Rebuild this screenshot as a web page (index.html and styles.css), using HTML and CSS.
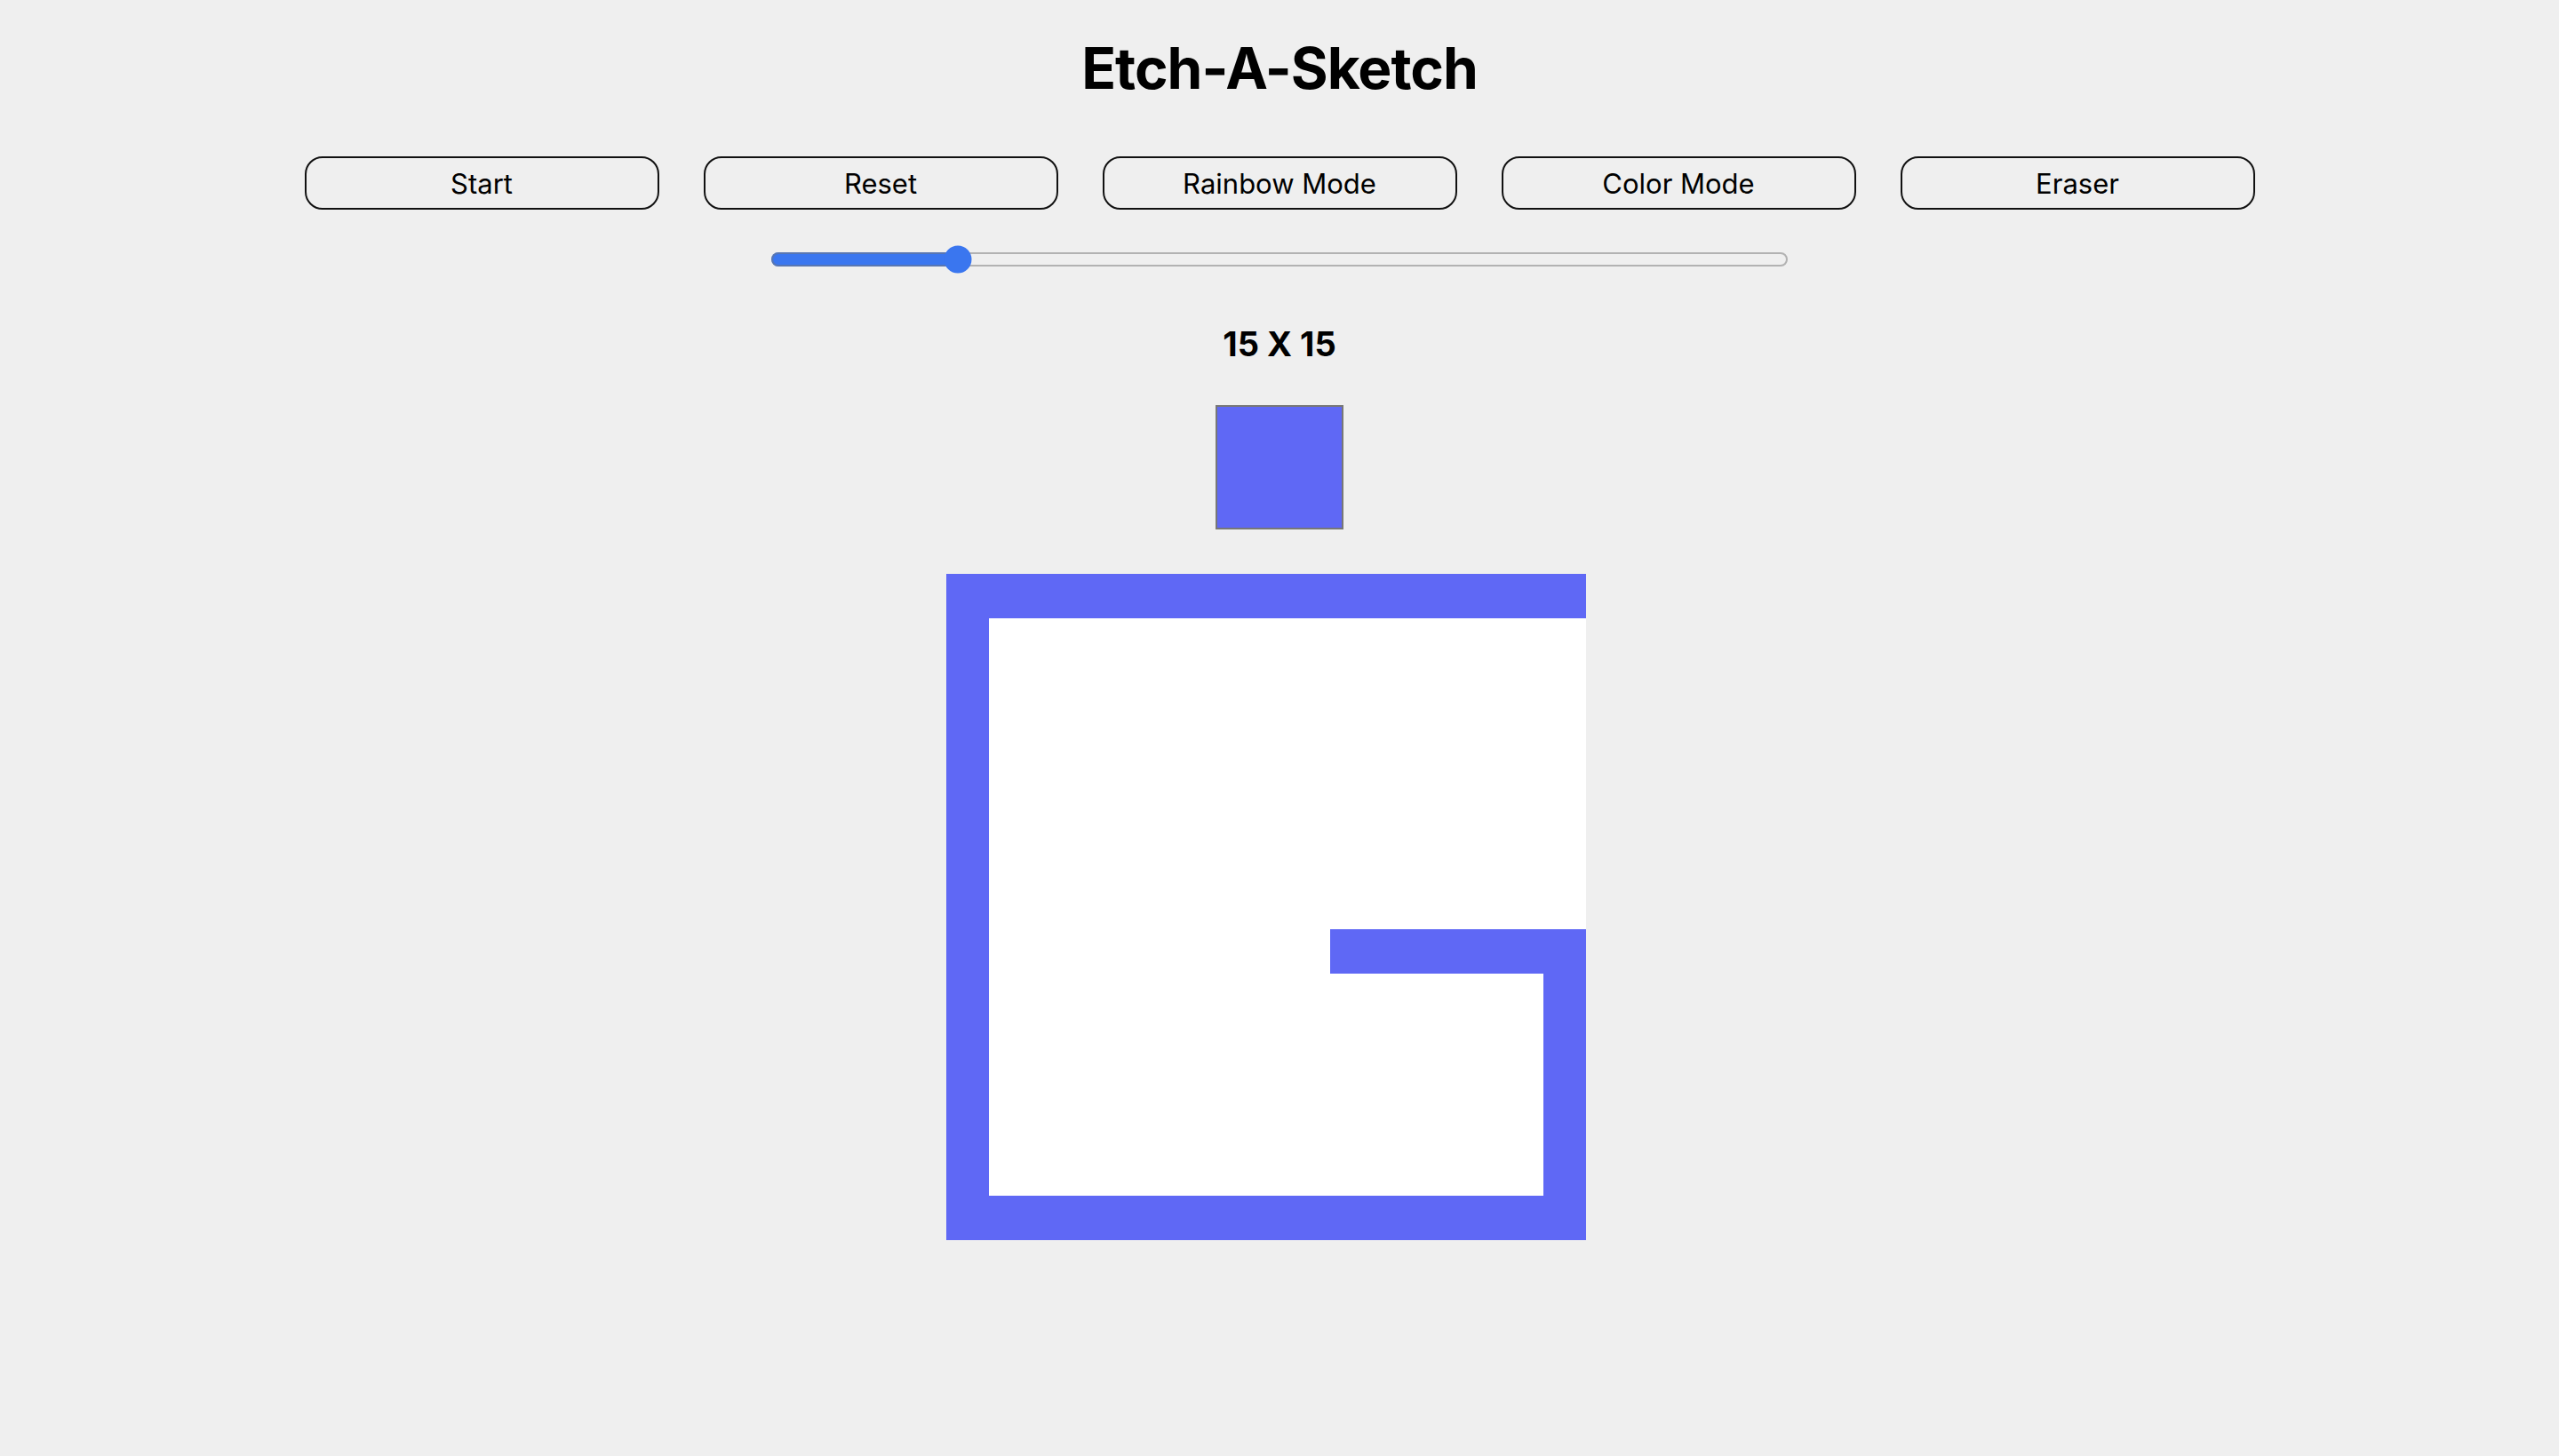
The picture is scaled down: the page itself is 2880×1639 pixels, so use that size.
FILE: index.html
```html
<!DOCTYPE html>
<html lang="en">
<head>
<meta charset="utf-8">
<title>Etch-A-Sketch</title>
<link rel="stylesheet" href="styles.css">
</head>
<body>
<main class="app">
  <h1 class="title">Etch-A-Sketch</h1>
  <div class="controls">
    <button class="btn">Start</button>
    <button class="btn">Reset</button>
    <button class="btn">Rainbow Mode</button>
    <button class="btn">Color Mode</button>
    <button class="btn">Eraser</button>
  </div>
  <input class="size-slider" type="range" min="1" max="81" value="15">
  <p class="size-label">15 X 15</p>
  <div class="swatch"></div>
  <div class="board">
<div class="cell on"></div><div class="cell on"></div><div class="cell on"></div><div class="cell on"></div><div class="cell on"></div><div class="cell on"></div><div class="cell on"></div><div class="cell on"></div><div class="cell on"></div><div class="cell on"></div><div class="cell on"></div><div class="cell on"></div><div class="cell on"></div><div class="cell on"></div><div class="cell on"></div>
<div class="cell on"></div><div class="cell"></div><div class="cell"></div><div class="cell"></div><div class="cell"></div><div class="cell"></div><div class="cell"></div><div class="cell"></div><div class="cell"></div><div class="cell"></div><div class="cell"></div><div class="cell"></div><div class="cell"></div><div class="cell"></div><div class="cell"></div>
<div class="cell on"></div><div class="cell"></div><div class="cell"></div><div class="cell"></div><div class="cell"></div><div class="cell"></div><div class="cell"></div><div class="cell"></div><div class="cell"></div><div class="cell"></div><div class="cell"></div><div class="cell"></div><div class="cell"></div><div class="cell"></div><div class="cell"></div>
<div class="cell on"></div><div class="cell"></div><div class="cell"></div><div class="cell"></div><div class="cell"></div><div class="cell"></div><div class="cell"></div><div class="cell"></div><div class="cell"></div><div class="cell"></div><div class="cell"></div><div class="cell"></div><div class="cell"></div><div class="cell"></div><div class="cell"></div>
<div class="cell on"></div><div class="cell"></div><div class="cell"></div><div class="cell"></div><div class="cell"></div><div class="cell"></div><div class="cell"></div><div class="cell"></div><div class="cell"></div><div class="cell"></div><div class="cell"></div><div class="cell"></div><div class="cell"></div><div class="cell"></div><div class="cell"></div>
<div class="cell on"></div><div class="cell"></div><div class="cell"></div><div class="cell"></div><div class="cell"></div><div class="cell"></div><div class="cell"></div><div class="cell"></div><div class="cell"></div><div class="cell"></div><div class="cell"></div><div class="cell"></div><div class="cell"></div><div class="cell"></div><div class="cell"></div>
<div class="cell on"></div><div class="cell"></div><div class="cell"></div><div class="cell"></div><div class="cell"></div><div class="cell"></div><div class="cell"></div><div class="cell"></div><div class="cell"></div><div class="cell"></div><div class="cell"></div><div class="cell"></div><div class="cell"></div><div class="cell"></div><div class="cell"></div>
<div class="cell on"></div><div class="cell"></div><div class="cell"></div><div class="cell"></div><div class="cell"></div><div class="cell"></div><div class="cell"></div><div class="cell"></div><div class="cell"></div><div class="cell"></div><div class="cell"></div><div class="cell"></div><div class="cell"></div><div class="cell"></div><div class="cell"></div>
<div class="cell on"></div><div class="cell"></div><div class="cell"></div><div class="cell"></div><div class="cell"></div><div class="cell"></div><div class="cell"></div><div class="cell"></div><div class="cell"></div><div class="cell on"></div><div class="cell on"></div><div class="cell on"></div><div class="cell on"></div><div class="cell on"></div><div class="cell on"></div>
<div class="cell on"></div><div class="cell"></div><div class="cell"></div><div class="cell"></div><div class="cell"></div><div class="cell"></div><div class="cell"></div><div class="cell"></div><div class="cell"></div><div class="cell"></div><div class="cell"></div><div class="cell"></div><div class="cell"></div><div class="cell"></div><div class="cell on"></div>
<div class="cell on"></div><div class="cell"></div><div class="cell"></div><div class="cell"></div><div class="cell"></div><div class="cell"></div><div class="cell"></div><div class="cell"></div><div class="cell"></div><div class="cell"></div><div class="cell"></div><div class="cell"></div><div class="cell"></div><div class="cell"></div><div class="cell on"></div>
<div class="cell on"></div><div class="cell"></div><div class="cell"></div><div class="cell"></div><div class="cell"></div><div class="cell"></div><div class="cell"></div><div class="cell"></div><div class="cell"></div><div class="cell"></div><div class="cell"></div><div class="cell"></div><div class="cell"></div><div class="cell"></div><div class="cell on"></div>
<div class="cell on"></div><div class="cell"></div><div class="cell"></div><div class="cell"></div><div class="cell"></div><div class="cell"></div><div class="cell"></div><div class="cell"></div><div class="cell"></div><div class="cell"></div><div class="cell"></div><div class="cell"></div><div class="cell"></div><div class="cell"></div><div class="cell on"></div>
<div class="cell on"></div><div class="cell"></div><div class="cell"></div><div class="cell"></div><div class="cell"></div><div class="cell"></div><div class="cell"></div><div class="cell"></div><div class="cell"></div><div class="cell"></div><div class="cell"></div><div class="cell"></div><div class="cell"></div><div class="cell"></div><div class="cell on"></div>
<div class="cell on"></div><div class="cell on"></div><div class="cell on"></div><div class="cell on"></div><div class="cell on"></div><div class="cell on"></div><div class="cell on"></div><div class="cell on"></div><div class="cell on"></div><div class="cell on"></div><div class="cell on"></div><div class="cell on"></div><div class="cell on"></div><div class="cell on"></div><div class="cell on"></div>
  </div>
</main>
</body>
</html>
```
FILE: styles.css
```css
html, body {
  margin: 0;
  padding: 0;
}

body {
  background: #efefef;
  color: #000;
  font-family: Inter, "Liberation Sans", Arial, sans-serif;
}

.app {
  display: flex;
  flex-direction: column;
  align-items: center;
  padding-top: 45px;
  padding-bottom: 200px;
}

.title {
  margin: 0;
  font-size: 64px;
  line-height: 64px;
  font-weight: 700;
  letter-spacing: -1px;
}

.controls {
  display: flex;
  gap: 50px;
  margin-top: 67px;
}

.btn {
  width: 399px;
  height: 60px;
  margin: 0;
  padding: 0;
  border: 2px solid #111;
  border-radius: 20px;
  background: #efefef;
  color: #000;
  font-family: Inter, "Liberation Sans", Arial, sans-serif;
  font-size: 31px;
  line-height: 1;
}

.size-slider {
  zoom: 2;
  width: 573px;
  height: 16px;
  margin: 20px 0 0;
  accent-color: #3a76ef;
}

.size-label {
  margin: 60px 0 0;
  font-size: 38px;
  line-height: 38px;
  font-weight: 700;
}

.swatch {
  width: 140px;
  height: 136px;
  margin-top: 50px;
  border: 2px solid #777;
  background: #5f68f5;
}

.board {
  display: grid;
  grid-template-columns: repeat(15, 48px);
  grid-template-rows: repeat(15, 50px);
  width: 750px;
  height: 750px;
  margin-top: 50px;
}

.cell {
  background: #fff;
}

.cell.on {
  background: #5f68f5;
}
```
